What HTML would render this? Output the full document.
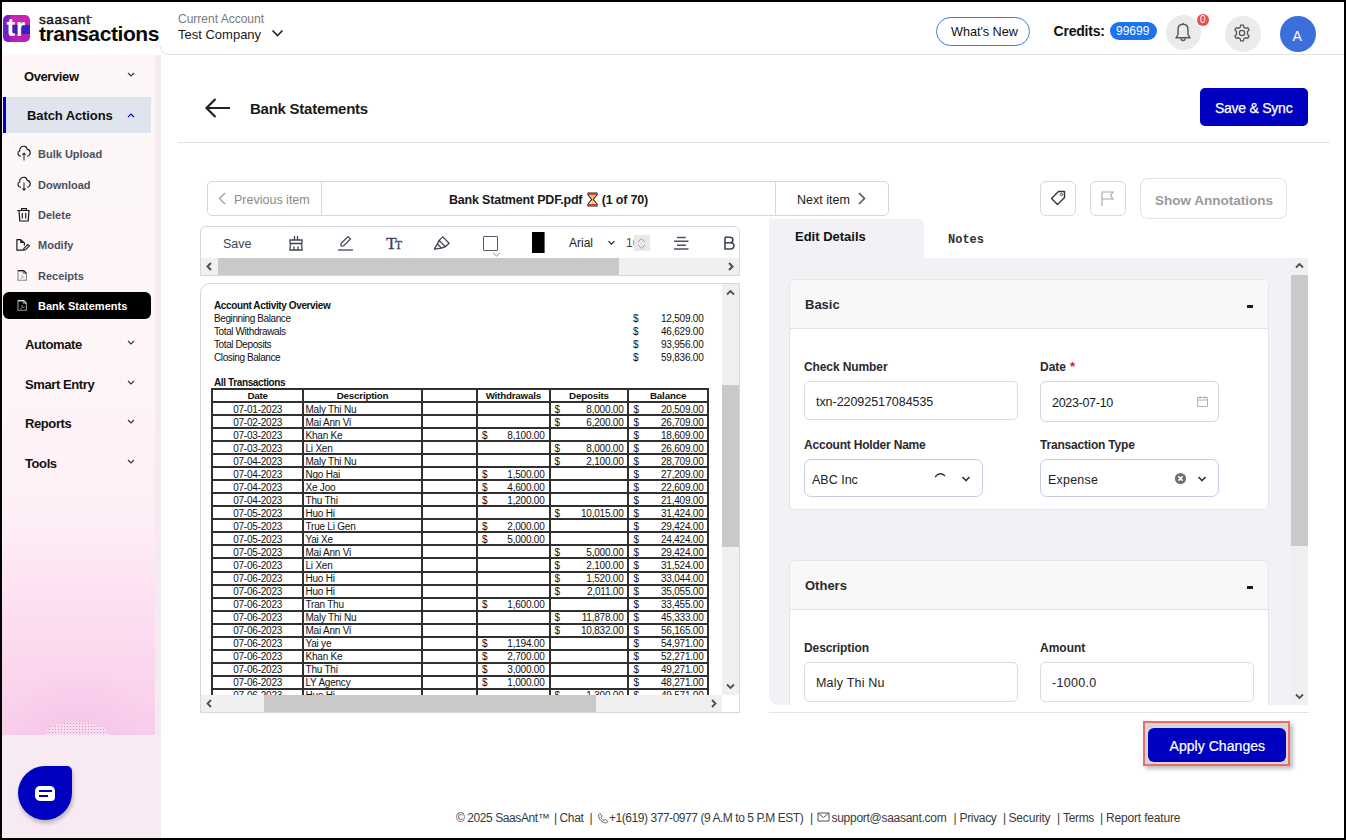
<!DOCTYPE html>
<html><head><meta charset="utf-8">
<style>
*{box-sizing:border-box;margin:0;padding:0}
html,body{width:1346px;height:840px;overflow:hidden;background:#000;font-family:"Liberation Sans",sans-serif;color:#1a1a1a}
.a{position:absolute}
#page{position:absolute;left:2px;top:2px;width:1342px;height:836px;background:#fff;overflow:hidden}
.t{position:absolute;white-space:nowrap;line-height:1}
</style></head><body>
<div id="page"></div>
<!-- everything positioned in absolute page coords -->
<div id="root" class="a" style="left:0;top:0;width:1346px;height:840px;overflow:hidden">

<!-- HEADER -->
<div class="a" style="left:3px;top:15px;width:27px;height:27px;border-radius:5px;background:linear-gradient(90deg,rgba(120,28,196,0.9) 0,rgba(120,28,196,0.9) 6px,rgba(120,28,196,0) 9px),linear-gradient(180deg,#c824b4 0%,#c824b4 37%,#3a20c2 37%,#3a20c2 70%,#b820b6 70%);overflow:hidden">
  <div class="t" style="left:3.6px;top:-0.8px;font-size:26px;font-weight:bold;color:#fff">t</div><div class="t" style="left:13.2px;top:-0.8px;font-size:26px;font-weight:bold;color:#fff;transform:scaleX(0.9);transform-origin:0 0">r</div>
</div>
<div class="t" style="left:39px;top:13px;font-size:13.5px;font-weight:normal;color:#111;letter-spacing:0.6px;-webkit-text-stroke:0.45px #111">saasant</div>
<div class="a" style="left:86px;top:17px;width:5.5px;height:1.3px;background:#3a30e0"></div>
<div class="t" style="left:39px;top:23px;font-size:21px;font-weight:bold;color:#0a0a0a;letter-spacing:-0.4px">transactions</div>

<div class="t" style="left:178px;top:13px;font-size:12px;color:#7a7a7a">Current Account</div>
<div class="t" style="left:178px;top:28px;font-size:13px;color:#1a1a1a">Test Company</div>
<svg class="a" style="left:271px;top:29px" width="13" height="9" viewBox="0 0 13 9"><path d="M1.5 1.5 L6.5 6.5 L11.5 1.5" fill="none" stroke="#222" stroke-width="1.6"/></svg>

<div class="a" style="left:168px;top:54px;width:1176px;height:1px;background:#e3e3e3"></div>
<svg class="a" style="left:160px;top:46px" width="10" height="10" viewBox="0 0 10 10"><path d="M1 0 C1 5 3 8.5 8 8.5" fill="none" stroke="#e3e3e3" stroke-width="1"/></svg>

<div class="a" style="left:936px;top:17px;width:94px;height:29px;border:1.5px solid #3a7be0;border-radius:14.5px"></div>
<div class="t" style="left:951px;top:26px;font-size:12.7px;color:#111;letter-spacing:-0.05px">What's New</div>
<div class="t" style="left:1053.5px;top:24px;font-size:14px;font-weight:bold;color:#111;letter-spacing:-0.2px">Credits:</div>
<div class="a" style="left:1110px;top:22px;width:47px;height:18px;border-radius:9px;background:#1b73f0"></div>
<div class="t" style="left:1116px;top:25px;font-size:12px;color:#fff">99699</div>
<div class="a" style="left:1166px;top:15px;width:35px;height:35px;border-radius:50%;background:#ebebeb"></div>
<svg class="a" style="left:1173px;top:22px" width="20" height="21" viewBox="0 0 20 21"><path d="M10 2.2 C6.6 2.2 5 4.8 5 7.8 V12.5 L3 15.8 H17 L15 12.5 V7.8 C15 4.8 13.4 2.2 10 2.2 Z" fill="none" stroke="#555" stroke-width="1.4" stroke-linejoin="round"/><path d="M8 16.5 A2 2 0 0 0 12 16.5" fill="none" stroke="#555" stroke-width="1.4"/><path d="M10 1 V2.2" stroke="#555" stroke-width="1.4"/></svg>
<div class="a" style="left:1197px;top:14px;width:12px;height:12px;border-radius:50%;background:#f04a4a"></div>
<div class="t" style="left:1200px;top:15px;font-size:10px;color:#fff">0</div>
<div class="a" style="left:1225px;top:16px;width:36px;height:36px;border-radius:50%;background:#ebebeb"></div>
<svg class="a" style="left:1232px;top:22.5px" width="20" height="20" viewBox="0 0 24 24"><path d="M10.3 2.5 H13.7 L14.2 5.2 A7.2 7.2 0 0 1 16.3 6.4 L18.9 5.5 L20.6 8.4 L18.5 10.2 A7.2 7.2 0 0 1 18.5 13.8 L20.6 15.6 L18.9 18.5 L16.3 17.6 A7.2 7.2 0 0 1 14.2 18.8 L13.7 21.5 H10.3 L9.8 18.8 A7.2 7.2 0 0 1 7.7 17.6 L5.1 18.5 L3.4 15.6 L5.5 13.8 A7.2 7.2 0 0 1 5.5 10.2 L3.4 8.4 L5.1 5.5 L7.7 6.4 A7.2 7.2 0 0 1 9.8 5.2 Z" fill="none" stroke="#555" stroke-width="1.5" stroke-linejoin="round"/><circle cx="12" cy="12" r="3.2" fill="none" stroke="#555" stroke-width="1.5"/></svg>
<div class="a" style="left:1280px;top:16px;width:36px;height:36px;border-radius:50%;background:#3d6fdc"></div>
<div class="t" style="left:1292.5px;top:28.5px;font-size:14px;color:#fff">A</div>

<!-- SIDEBAR -->
<div class="a" style="left:2px;top:55px;width:153px;height:680px;background:radial-gradient(circle 72px at 77px 680px,rgba(244,186,230,0.45),rgba(244,186,230,0.15) 70%,rgba(244,186,230,0) 100%),linear-gradient(180deg,#fdf7f7 0%,#fef5f8 45%,#feeff7 68%,#fde0f2 80%,#fad3ed 94%,#f8cdea 100%)"></div>
<div class="a" style="left:45px;top:722px;width:64px;height:26px;border-radius:50%;background:radial-gradient(circle,#d77fc8 0.7px,transparent 1px) 0 0/3px 3px,#f7dff0;opacity:0.85"></div>
<div class="a" style="left:2px;top:735px;width:159px;height:103px;background:#f7eaf2"></div>
<div class="a" style="left:155px;top:55px;width:6px;height:680px;background:#f4eaf0"></div>

<div class="t" style="left:24px;top:70px;font-size:13px;font-weight:bold;color:#111;letter-spacing:-0.4px">Overview</div>
<svg class="a" style="left:126px;top:71px" width="10" height="7" viewBox="0 0 10 7"><path d="M2 2 L5 5 L8 2" fill="none" stroke="#333" stroke-width="1.1"/></svg>

<div class="a" style="left:3px;top:97px;width:148px;height:36px;background:#dfe4ef"></div>
<div class="a" style="left:3px;top:97px;width:3px;height:36px;background:#0000c8"></div>
<div class="t" style="left:27px;top:109px;font-size:13px;font-weight:bold;color:#111;letter-spacing:-0.1px">Batch Actions</div>
<svg class="a" style="left:126px;top:112px" width="10" height="7" viewBox="0 0 10 7"><path d="M2 5 L5 2 L8 5" fill="none" stroke="#0000c8" stroke-width="1.1"/></svg>

<!-- sub items -->
<svg class="a" style="left:12px;top:140px" width="24" height="24" viewBox="0 0 24 24"><path d="M8.6 16.2 C5.6 16 5 12 7.6 11 C7.4 7.6 10.2 5.6 13 6.4 C14.4 6.9 15 8 15.3 9.4 C18.6 9.6 19.6 14.8 15.6 16.2" fill="none" stroke="#1a1a1a" stroke-width="1.15" stroke-linecap="round"/><path d="M12 20.6 V14" stroke="#555" stroke-width="1.3"/><path d="M9.7 14.8 L12 12.4 L14.3 14.8 Z" fill="#1a1a1a"/></svg>
<div class="t" style="left:38px;top:149px;font-size:11px;font-weight:bold;color:#4b5060">Bulk Upload</div>

<svg class="a" style="left:12px;top:171px" width="24" height="24" viewBox="0 0 24 24"><path d="M8.6 16.2 C5.6 16 5 12 7.6 11 C7.4 7.6 10.2 5.6 13 6.4 C14.4 6.9 15 8 15.3 9.4 C18.6 9.6 19.6 14.8 15.6 16.2" fill="none" stroke="#1a1a1a" stroke-width="1.15" stroke-linecap="round"/><path d="M12 11.5 V18.5" stroke="#555" stroke-width="1.3"/><path d="M9.7 17.6 L12 20 L14.3 17.6 Z" fill="#1a1a1a"/></svg>
<div class="t" style="left:38px;top:180px;font-size:11px;font-weight:bold;color:#4b5060">Download</div>

<svg class="a" style="left:12px;top:203px" width="24" height="24" viewBox="0 0 24 24"><path d="M5.3 7.5 H17.7 M9.5 7.5 V5.6 H14.5 V7.5 M7 7.5 L7.8 18 H16.2 L17 7.5 M10.3 10 V15.5 M13.7 10 V15.5" fill="none" stroke="#1a1a1a" stroke-width="1.2" stroke-linejoin="round"/></svg>
<div class="t" style="left:38px;top:210px;font-size:11px;font-weight:bold;color:#4b5060">Delete</div>

<svg class="a" style="left:12px;top:232px" width="24" height="24" viewBox="0 0 24 24"><path d="M11.3 18.1 H4.9 V7.7 H8.6 L12.4 11 V13.5" fill="none" stroke="#1a1a1a" stroke-width="1.2" stroke-linejoin="round"/><path d="M8.8 7.8 V10.4 H11.6" fill="none" stroke="#1a1a1a" stroke-width="1.2"/><path d="M11.6 18.3 L11.9 16.3 L15.9 12.3 L17.4 13.8 L13.4 17.8 Z" fill="none" stroke="#1a1a1a" stroke-width="1.1" stroke-linejoin="round"/></svg>
<div class="t" style="left:38px;top:240px;font-size:11px;font-weight:bold;color:#4b5060">Modify</div>

<svg class="a" style="left:12px;top:264px" width="24" height="24" viewBox="0 0 24 24"><path d="M6 16.2 V6.6 H11.6 L14.4 9.4 V16.2 Z" fill="none" stroke="#888" stroke-width="1.1"/><path d="M6 6.6 H11.6 L14.4 9.4" fill="none" stroke="#1a1a1a" stroke-width="1.2"/><path d="M11 6.8 V9.2 H14" fill="none" stroke="#555" stroke-width="0.9"/><path d="M9.8 11 L10.6 13 C9.6 13.6 9 14.4 8.6 15 M10.6 13 C11.2 13.8 12 13.4 12.4 13" fill="none" stroke="#999" stroke-width="0.9"/></svg>
<div class="t" style="left:38px;top:271px;font-size:11px;font-weight:bold;color:#4b5060">Receipts</div>

<div class="a" style="left:3px;top:292px;width:148px;height:27px;border-radius:6px;background:#000"></div>
<svg class="a" style="left:12px;top:294px" width="24" height="24" viewBox="0 0 24 24"><path d="M6 16.2 V6.6 H11.6 L14.4 9.4 V16.2 Z" fill="none" stroke="#999" stroke-width="1.1"/><path d="M6 6.6 H11.6 L14.4 9.4" fill="none" stroke="#ddd" stroke-width="1.2"/><path d="M11 6.8 V9.2 H14" fill="none" stroke="#aaa" stroke-width="0.9"/><path d="M9.8 11 L10.6 13 C9.6 13.6 9 14.4 8.6 15 M10.6 13 C11.2 13.8 12 13.4 12.4 13" fill="none" stroke="#aaa" stroke-width="0.9"/></svg>
<div class="t" style="left:38px;top:301px;font-size:11px;font-weight:bold;color:#fff">Bank Statements</div>

<div class="t" style="left:25px;top:338px;font-size:13px;font-weight:bold;color:#111;letter-spacing:-0.4px">Automate</div>
<svg class="a" style="left:126px;top:339px" width="10" height="7" viewBox="0 0 10 7"><path d="M2 2 L5 5 L8 2" fill="none" stroke="#333" stroke-width="1.1"/></svg>
<div class="t" style="left:25px;top:378px;font-size:13px;font-weight:bold;color:#111;letter-spacing:-0.4px">Smart Entry</div>
<svg class="a" style="left:126px;top:379px" width="10" height="7" viewBox="0 0 10 7"><path d="M2 2 L5 5 L8 2" fill="none" stroke="#333" stroke-width="1.1"/></svg>
<div class="t" style="left:25px;top:417px;font-size:13px;font-weight:bold;color:#111;letter-spacing:-0.4px">Reports</div>
<svg class="a" style="left:126px;top:418px" width="10" height="7" viewBox="0 0 10 7"><path d="M2 2 L5 5 L8 2" fill="none" stroke="#333" stroke-width="1.1"/></svg>
<div class="t" style="left:25px;top:457px;font-size:13px;font-weight:bold;color:#111;letter-spacing:-0.4px">Tools</div>
<svg class="a" style="left:126px;top:458px" width="10" height="7" viewBox="0 0 10 7"><path d="M2 2 L5 5 L8 2" fill="none" stroke="#333" stroke-width="1.1"/></svg>

<!-- chat button -->
<div class="a" style="left:18px;top:766px;width:54px;height:54px;border-radius:27px 5px 27px 27px;background:#0000c0;box-shadow:1px 3px 4px rgba(0,0,0,0.25)"></div>
<div class="a" style="left:35px;top:786px;width:20px;height:15px;border-radius:5px 5px 4px 5px;background:#fff"></div>
<div class="a" style="left:39px;top:790px;width:13px;height:2px;background:#0000c0"></div>
<div class="a" style="left:39px;top:795px;width:9px;height:2px;background:#0000c0"></div>

<!-- MAIN -->
<div class="t" style="left:250px;top:101px;font-size:15px;font-weight:bold;color:#1a1a1a;letter-spacing:-0.25px">Bank Statements</div>
<div class="a" style="left:178px;top:142px;width:1152px;height:1px;background:#e3e3e6"></div>
<div class="a" style="left:1200px;top:88px;width:108px;height:38px;border-radius:5px;background:#0000c0"></div>
<div class="t" style="left:1215px;top:101px;font-size:14px;color:#fff;letter-spacing:-0.25px;-webkit-text-stroke:0.25px #fff">Save &amp; Sync</div>
<svg class="a" style="left:204px;top:97px" width="28" height="22" viewBox="0 0 28 22"><path d="M26 11 H3 M11.5 2 L2.5 11 L11.5 20" fill="none" stroke="#222" stroke-width="2.2"/></svg>

<!-- item nav -->
<div class="a" style="left:207px;top:181px;width:682px;height:35px;border:1px solid #d6d6e4;border-radius:5px"></div>
<div class="a" style="left:321px;top:181px;width:1px;height:35px;background:#d6d6e4"></div>
<div class="a" style="left:775px;top:181px;width:1px;height:35px;background:#d6d6e4"></div>
<svg class="a" style="left:216px;top:191px" width="12" height="15" viewBox="0 0 12 15"><path d="M9 2 L3.5 7.5 L9 13" fill="none" stroke="#aaa" stroke-width="1.6"/></svg>
<div class="t" style="left:234px;top:194px;font-size:12.5px;color:#8a8a8a">Previous item</div>
<div class="t" style="left:449px;top:194px;font-size:12.5px;font-weight:bold;color:#1a1a1a;letter-spacing:-0.2px">Bank Statment PDF.pdf <span style="display:inline-block;width:13px"></span> (1 of 70)</div>
<svg class="a" style="left:587px;top:192px" width="11" height="15" viewBox="0 0 11 15"><path d="M1 1 H10 V3 L6.2 7.5 L10 12 V14 H1 V12 L4.8 7.5 L1 3 Z" fill="#eef2f8" stroke="#111" stroke-width="1.1" stroke-linejoin="round"/><path d="M1.5 1.5 H9.5 V3 H1.5 Z M1.5 12 H9.5 V13.5 H1.5 Z" fill="#e0301e"/><path d="M2.2 3.2 H8.8 L5.5 7.2 Z" fill="#f8c040"/><path d="M5.5 7 V11.5" stroke="#f8c040" stroke-width="0.9"/><path d="M3 12 L5.5 10.8 L8 12 Z" fill="#f8c040"/></svg>
<div class="t" style="left:797px;top:194px;font-size:12.5px;color:#1a1a1a">Next item</div>
<svg class="a" style="left:856px;top:191px" width="12" height="15" viewBox="0 0 12 15"><path d="M3 2 L8.5 7.5 L3 13" fill="none" stroke="#555" stroke-width="1.6"/></svg>

<div class="a" style="left:1040px;top:181px;width:36px;height:35px;border:1px solid #d8d8e4;border-radius:6px"></div>
<svg class="a" style="left:1049px;top:189px" width="18" height="18" viewBox="0 0 18 18"><path d="M9.5 2.5 H15.5 V8.5 L8.5 15.5 L2.5 9.5 Z" fill="none" stroke="#333" stroke-width="1.4" stroke-linejoin="round"/><circle cx="12.5" cy="5.5" r="1.1" fill="none" stroke="#333" stroke-width="1"/></svg>
<div class="a" style="left:1090px;top:181px;width:36px;height:35px;border:1px solid #d8d8e4;border-radius:6px"></div>
<svg class="a" style="left:1099px;top:189px" width="18" height="18" viewBox="0 0 18 18"><path d="M3 17 V3 H14 L11.5 6.5 L14 10 H3" fill="none" stroke="#aaa" stroke-width="1.2"/></svg>
<div class="a" style="left:1140px;top:178px;width:147px;height:41px;border:1px solid #e0e0e6;border-radius:8px"></div>
<div class="t" style="left:1155px;top:194px;font-size:13.5px;font-weight:bold;color:#9a9a9a">Show Annotations</div>

<!-- PDF toolbar -->
<div class="a" style="left:200px;top:226px;width:540px;height:50px;border:1px solid #d6d6e4;border-radius:6px 6px 0 0;overflow:hidden">
  <div class="a" style="left:0;top:31px;width:538px;height:17px;background:#f0f0f0"></div>
  <div class="a" style="left:17px;top:31px;width:401px;height:17px;background:#c9c9c9"></div>
</div>
<svg class="a" style="left:203px;top:260px" width="12" height="13" viewBox="0 0 12 13"><path d="M8 3 L4.5 6.5 L8 10" fill="none" stroke="#505050" stroke-width="2"/></svg>
<svg class="a" style="left:725px;top:260px" width="12" height="13" viewBox="0 0 12 13"><path d="M4 3 L7.5 6.5 L4 10" fill="none" stroke="#505050" stroke-width="2"/></svg>
<div class="t" style="left:223px;top:238px;font-size:12.5px;color:#3d4454">Save</div>
<svg class="a" style="left:288px;top:235px" width="16" height="16" viewBox="0 0 16 16"><path d="M6.5 1 V5 H9.5 V1 M2 8.5 V5 H14 V8.5 M2.5 8.5 H13.5 M2.5 8.5 L1.8 15 H14.2 L13.5 8.5 M6 11.5 V15 M10 11.5 V15" fill="none" stroke="#3d4454" stroke-width="1.3"/></svg>
<svg class="a" style="left:337px;top:235px" width="18" height="16" viewBox="0 0 18 16"><path d="M4 11 L4 8.5 L11 1.5 L13.5 4 L6.5 11 Z" fill="none" stroke="#3d4454" stroke-width="1.2"/><path d="M1 15 H16" stroke="#3d4454" stroke-width="1.3"/></svg>
<div class="t" style="left:386px;top:234.5px;font-family:'Liberation Serif',serif;font-size:17.5px;color:#3d4454;letter-spacing:-1.6px;-webkit-text-stroke:0.3px #3d4454">T<span style="font-size:11.5px;letter-spacing:0">T</span></div>
<svg class="a" style="left:433px;top:235px" width="18" height="16" viewBox="0 0 18 16"><path d="M9.8 1.9 L16.1 8.2 L12.4 11.7 L6.1 5.4 Z M6.1 5.4 L4.4 8.9 L8.6 13.2 L12.4 11.7 M4.4 8.9 L1.4 14.1 L8.6 13.2" fill="none" stroke="#3d4454" stroke-width="1.3" stroke-linejoin="round"/></svg>
<div class="a" style="left:483px;top:236px;width:15px;height:15px;border:1.5px solid #555b68;border-radius:1px"></div>
<svg class="a" style="left:492px;top:252px" width="9" height="5" viewBox="0 0 9 5"><path d="M1 1 L4.5 4 L8 1" fill="none" stroke="#888" stroke-width="0.9"/></svg>
<div class="a" style="left:532px;top:232px;width:13px;height:21px;background:#000;border-right:1.5px solid #666"></div>
<div class="t" style="left:569px;top:237px;font-size:12px;color:#222">Arial</div>
<svg class="a" style="left:607px;top:240px" width="9" height="6" viewBox="0 0 9 6"><path d="M1.5 1.2 L4.5 4.2 L7.5 1.2" fill="none" stroke="#222" stroke-width="1.2"/></svg>
<div class="t" style="left:626px;top:237px;font-size:12px;color:#444;width:8px;overflow:hidden">16</div>
<div class="a" style="left:634px;top:235px;width:16px;height:16px;background:#e8e8e8"></div>
<svg class="a" style="left:636px;top:237px" width="11" height="13" viewBox="0 0 11 13"><path d="M2 5 L5.5 1.5 L9 5 M2 8 L5.5 11.5 L9 8" fill="none" stroke="#999" stroke-width="0.9"/></svg>
<svg class="a" style="left:665px;top:230px" width="80" height="26" viewBox="0 0 80 26"><path d="M12 7.4 H20.8 M9 11.2 H23.5 M12 15.2 H20.8 M9 18.9 H23.5" stroke="#4a5160" stroke-width="1.5"/><path d="M60 7.3 V19 H65.3 C67.6 19 68.9 17.8 68.9 15.8 C68.9 13.9 67.6 12.7 65.3 12.7 H60 M60 7.3 H64.8 C66.8 7.3 67.9 8.3 67.9 9.9 C67.9 11.6 66.8 12.7 64.8 12.7" fill="none" stroke="#3d4454" stroke-width="1.6"/></svg>

<!-- PDF VIEWER -->
<div class="a" style="left:200px;top:283px;width:540px;height:430px;border:1px solid #d6d6e4;border-radius:10px 0 0 0;overflow:hidden;background:#fff">
 <div class="a" style="left:0;top:0;width:521px;height:411px;overflow:hidden">
<!--PDFSTART-->
<div class="t" style="left:13.0px;top:17.0px;font-size:10px;font-weight:bold;letter-spacing:-0.38px;color:#111">Account Activity Overview</div>
<div class="t" style="left:13.0px;top:29.5px;font-size:10px;color:#111;letter-spacing:-0.22px;letter-spacing:-0.4px">Beginning Balance</div>
<div class="t" style="left:432.0px;top:29.5px;font-size:10px;color:#111;letter-spacing:-0.22px">$</div>
<div class="t" style="left:422.5px;top:29.5px;width:80px;text-align:right;font-size:10px;color:#111;letter-spacing:-0.22px">12,509.00</div>
<div class="t" style="left:13.0px;top:42.5px;font-size:10px;color:#111;letter-spacing:-0.22px;letter-spacing:-0.4px">Total Withdrawals</div>
<div class="t" style="left:432.0px;top:42.5px;font-size:10px;color:#111;letter-spacing:-0.22px">$</div>
<div class="t" style="left:422.5px;top:42.5px;width:80px;text-align:right;font-size:10px;color:#111;letter-spacing:-0.22px">46,629.00</div>
<div class="t" style="left:13.0px;top:55.5px;font-size:10px;color:#111;letter-spacing:-0.22px;letter-spacing:-0.4px">Total Deposits</div>
<div class="t" style="left:432.0px;top:55.5px;font-size:10px;color:#111;letter-spacing:-0.22px">$</div>
<div class="t" style="left:422.5px;top:55.5px;width:80px;text-align:right;font-size:10px;color:#111;letter-spacing:-0.22px">93,956.00</div>
<div class="t" style="left:13.0px;top:68.5px;font-size:10px;color:#111;letter-spacing:-0.22px;letter-spacing:-0.4px">Closing Balance</div>
<div class="t" style="left:432.0px;top:68.5px;font-size:10px;color:#111;letter-spacing:-0.22px">$</div>
<div class="t" style="left:422.5px;top:68.5px;width:80px;text-align:right;font-size:10px;color:#111;letter-spacing:-0.22px">59,836.00</div>
<div class="t" style="left:13.0px;top:93.9px;font-size:10px;font-weight:bold;letter-spacing:-0.38px;color:#111">All Transactions</div>
<div class="a" style="left:10.0px;top:104.0px;width:498.0px;height:2.0px;background:#303030"></div>
<div class="a" style="left:10.0px;top:117.0px;width:498.0px;height:2.0px;background:#303030"></div>
<div class="a" style="left:10.0px;top:130.0px;width:498.0px;height:2.0px;background:#303030"></div>
<div class="a" style="left:10.0px;top:143.0px;width:498.0px;height:2.0px;background:#303030"></div>
<div class="a" style="left:10.0px;top:156.0px;width:498.0px;height:2.0px;background:#303030"></div>
<div class="a" style="left:10.0px;top:169.0px;width:498.0px;height:2.0px;background:#303030"></div>
<div class="a" style="left:10.0px;top:182.0px;width:498.0px;height:2.0px;background:#303030"></div>
<div class="a" style="left:10.0px;top:195.0px;width:498.0px;height:2.0px;background:#303030"></div>
<div class="a" style="left:10.0px;top:208.0px;width:498.0px;height:2.0px;background:#303030"></div>
<div class="a" style="left:10.0px;top:221.0px;width:498.0px;height:2.0px;background:#303030"></div>
<div class="a" style="left:10.0px;top:234.0px;width:498.0px;height:2.0px;background:#303030"></div>
<div class="a" style="left:10.0px;top:247.0px;width:498.0px;height:2.0px;background:#303030"></div>
<div class="a" style="left:10.0px;top:260.0px;width:498.0px;height:2.0px;background:#303030"></div>
<div class="a" style="left:10.0px;top:273.0px;width:498.0px;height:2.0px;background:#303030"></div>
<div class="a" style="left:10.0px;top:287.0px;width:498.0px;height:2.0px;background:#303030"></div>
<div class="a" style="left:10.0px;top:300.0px;width:498.0px;height:2.0px;background:#303030"></div>
<div class="a" style="left:10.0px;top:313.0px;width:498.0px;height:2.0px;background:#303030"></div>
<div class="a" style="left:10.0px;top:326.0px;width:498.0px;height:2.0px;background:#303030"></div>
<div class="a" style="left:10.0px;top:339.0px;width:498.0px;height:2.0px;background:#303030"></div>
<div class="a" style="left:10.0px;top:352.0px;width:498.0px;height:2.0px;background:#303030"></div>
<div class="a" style="left:10.0px;top:365.0px;width:498.0px;height:2.0px;background:#303030"></div>
<div class="a" style="left:10.0px;top:378.0px;width:498.0px;height:2.0px;background:#303030"></div>
<div class="a" style="left:10.0px;top:391.0px;width:498.0px;height:2.0px;background:#303030"></div>
<div class="a" style="left:10.0px;top:404.0px;width:498.0px;height:2.0px;background:#303030"></div>
<div class="a" style="left:10.0px;top:417.0px;width:498.0px;height:2.0px;background:#303030"></div>
<div class="a" style="left:10.0px;top:104.0px;width:2.0px;height:315.0px;background:#303030"></div>
<div class="a" style="left:101.0px;top:104.0px;width:2.0px;height:315.0px;background:#303030"></div>
<div class="a" style="left:220.0px;top:104.0px;width:2.0px;height:315.0px;background:#303030"></div>
<div class="a" style="left:275.0px;top:104.0px;width:2.0px;height:315.0px;background:#303030"></div>
<div class="a" style="left:348.0px;top:104.0px;width:2.0px;height:315.0px;background:#303030"></div>
<div class="a" style="left:426.0px;top:104.0px;width:2.0px;height:315.0px;background:#303030"></div>
<div class="a" style="left:506.0px;top:104.0px;width:2.0px;height:315.0px;background:#303030"></div>
<div class="t" style="left:11.0px;top:107.3px;width:91.30000000000001px;text-align:center;font-size:9.8px;font-weight:bold;color:#111;letter-spacing:-0.2px">Date</div>
<div class="t" style="left:102.3px;top:107.3px;width:118.5px;text-align:center;font-size:9.8px;font-weight:bold;color:#111;letter-spacing:-0.2px">Description</div>
<div class="t" style="left:276.0px;top:107.3px;width:72.70000000000005px;text-align:center;font-size:9.8px;font-weight:bold;color:#111;letter-spacing:-0.2px">Withdrawals</div>
<div class="t" style="left:348.7px;top:107.3px;width:78.5px;text-align:center;font-size:9.8px;font-weight:bold;color:#111;letter-spacing:-0.2px">Deposits</div>
<div class="t" style="left:427.2px;top:107.3px;width:79.79999999999995px;text-align:center;font-size:9.8px;font-weight:bold;color:#111;letter-spacing:-0.2px">Balance</div>
<div class="t" style="left:11.0px;top:120.5px;width:91.30000000000001px;text-align:center;font-size:10px;color:#111;letter-spacing:-0.22px">07-01-2023</div>
<div class="t" style="left:104.5px;top:120.5px;font-size:10px;color:#111;letter-spacing:-0.22px">Maly Thi Nu</div>
<div class="t" style="left:353.5px;top:120.5px;font-size:10px;color:#111;letter-spacing:-0.22px">$</div>
<div class="t" style="left:342.5px;top:120.5px;width:80px;text-align:right;font-size:10px;color:#111;letter-spacing:-0.22px">8,000.00</div>
<div class="t" style="left:432.5px;top:120.5px;font-size:10px;color:#111;letter-spacing:-0.22px">$</div>
<div class="t" style="left:422.5px;top:120.5px;width:80px;text-align:right;font-size:10px;color:#111;letter-spacing:-0.22px">20,509.00</div>
<div class="t" style="left:11.0px;top:133.6px;width:91.30000000000001px;text-align:center;font-size:10px;color:#111;letter-spacing:-0.22px">07-02-2023</div>
<div class="t" style="left:104.5px;top:133.6px;font-size:10px;color:#111;letter-spacing:-0.22px">Mai Ann Vi</div>
<div class="t" style="left:353.5px;top:133.6px;font-size:10px;color:#111;letter-spacing:-0.22px">$</div>
<div class="t" style="left:342.5px;top:133.6px;width:80px;text-align:right;font-size:10px;color:#111;letter-spacing:-0.22px">6,200.00</div>
<div class="t" style="left:432.5px;top:133.6px;font-size:10px;color:#111;letter-spacing:-0.22px">$</div>
<div class="t" style="left:422.5px;top:133.6px;width:80px;text-align:right;font-size:10px;color:#111;letter-spacing:-0.22px">26,709.00</div>
<div class="t" style="left:11.0px;top:146.6px;width:91.30000000000001px;text-align:center;font-size:10px;color:#111;letter-spacing:-0.22px">07-03-2023</div>
<div class="t" style="left:104.5px;top:146.6px;font-size:10px;color:#111;letter-spacing:-0.22px">Khan Ke</div>
<div class="t" style="left:281.0px;top:146.6px;font-size:10px;color:#111;letter-spacing:-0.22px">$</div>
<div class="t" style="left:263.5px;top:146.6px;width:80px;text-align:right;font-size:10px;color:#111;letter-spacing:-0.22px">8,100.00</div>
<div class="t" style="left:432.5px;top:146.6px;font-size:10px;color:#111;letter-spacing:-0.22px">$</div>
<div class="t" style="left:422.5px;top:146.6px;width:80px;text-align:right;font-size:10px;color:#111;letter-spacing:-0.22px">18,609.00</div>
<div class="t" style="left:11.0px;top:159.6px;width:91.30000000000001px;text-align:center;font-size:10px;color:#111;letter-spacing:-0.22px">07-03-2023</div>
<div class="t" style="left:104.5px;top:159.6px;font-size:10px;color:#111;letter-spacing:-0.22px">Li Xen</div>
<div class="t" style="left:353.5px;top:159.6px;font-size:10px;color:#111;letter-spacing:-0.22px">$</div>
<div class="t" style="left:342.5px;top:159.6px;width:80px;text-align:right;font-size:10px;color:#111;letter-spacing:-0.22px">8,000.00</div>
<div class="t" style="left:432.5px;top:159.6px;font-size:10px;color:#111;letter-spacing:-0.22px">$</div>
<div class="t" style="left:422.5px;top:159.6px;width:80px;text-align:right;font-size:10px;color:#111;letter-spacing:-0.22px">26,609.00</div>
<div class="t" style="left:11.0px;top:172.6px;width:91.30000000000001px;text-align:center;font-size:10px;color:#111;letter-spacing:-0.22px">07-04-2023</div>
<div class="t" style="left:104.5px;top:172.6px;font-size:10px;color:#111;letter-spacing:-0.22px">Maly Thi Nu</div>
<div class="t" style="left:353.5px;top:172.6px;font-size:10px;color:#111;letter-spacing:-0.22px">$</div>
<div class="t" style="left:342.5px;top:172.6px;width:80px;text-align:right;font-size:10px;color:#111;letter-spacing:-0.22px">2,100.00</div>
<div class="t" style="left:432.5px;top:172.6px;font-size:10px;color:#111;letter-spacing:-0.22px">$</div>
<div class="t" style="left:422.5px;top:172.6px;width:80px;text-align:right;font-size:10px;color:#111;letter-spacing:-0.22px">28,709.00</div>
<div class="t" style="left:11.0px;top:185.7px;width:91.30000000000001px;text-align:center;font-size:10px;color:#111;letter-spacing:-0.22px">07-04-2023</div>
<div class="t" style="left:104.5px;top:185.7px;font-size:10px;color:#111;letter-spacing:-0.22px">Ngo Hai</div>
<div class="t" style="left:281.0px;top:185.7px;font-size:10px;color:#111;letter-spacing:-0.22px">$</div>
<div class="t" style="left:263.5px;top:185.7px;width:80px;text-align:right;font-size:10px;color:#111;letter-spacing:-0.22px">1,500.00</div>
<div class="t" style="left:432.5px;top:185.7px;font-size:10px;color:#111;letter-spacing:-0.22px">$</div>
<div class="t" style="left:422.5px;top:185.7px;width:80px;text-align:right;font-size:10px;color:#111;letter-spacing:-0.22px">27,209.00</div>
<div class="t" style="left:11.0px;top:198.7px;width:91.30000000000001px;text-align:center;font-size:10px;color:#111;letter-spacing:-0.22px">07-04-2023</div>
<div class="t" style="left:104.5px;top:198.7px;font-size:10px;color:#111;letter-spacing:-0.22px">Xe Joo</div>
<div class="t" style="left:281.0px;top:198.7px;font-size:10px;color:#111;letter-spacing:-0.22px">$</div>
<div class="t" style="left:263.5px;top:198.7px;width:80px;text-align:right;font-size:10px;color:#111;letter-spacing:-0.22px">4,600.00</div>
<div class="t" style="left:432.5px;top:198.7px;font-size:10px;color:#111;letter-spacing:-0.22px">$</div>
<div class="t" style="left:422.5px;top:198.7px;width:80px;text-align:right;font-size:10px;color:#111;letter-spacing:-0.22px">22,609.00</div>
<div class="t" style="left:11.0px;top:211.7px;width:91.30000000000001px;text-align:center;font-size:10px;color:#111;letter-spacing:-0.22px">07-04-2023</div>
<div class="t" style="left:104.5px;top:211.7px;font-size:10px;color:#111;letter-spacing:-0.22px">Thu Thi</div>
<div class="t" style="left:281.0px;top:211.7px;font-size:10px;color:#111;letter-spacing:-0.22px">$</div>
<div class="t" style="left:263.5px;top:211.7px;width:80px;text-align:right;font-size:10px;color:#111;letter-spacing:-0.22px">1,200.00</div>
<div class="t" style="left:432.5px;top:211.7px;font-size:10px;color:#111;letter-spacing:-0.22px">$</div>
<div class="t" style="left:422.5px;top:211.7px;width:80px;text-align:right;font-size:10px;color:#111;letter-spacing:-0.22px">21,409.00</div>
<div class="t" style="left:11.0px;top:224.8px;width:91.30000000000001px;text-align:center;font-size:10px;color:#111;letter-spacing:-0.22px">07-05-2023</div>
<div class="t" style="left:104.5px;top:224.8px;font-size:10px;color:#111;letter-spacing:-0.22px">Huo Hi</div>
<div class="t" style="left:353.5px;top:224.8px;font-size:10px;color:#111;letter-spacing:-0.22px">$</div>
<div class="t" style="left:342.5px;top:224.8px;width:80px;text-align:right;font-size:10px;color:#111;letter-spacing:-0.22px">10,015.00</div>
<div class="t" style="left:432.5px;top:224.8px;font-size:10px;color:#111;letter-spacing:-0.22px">$</div>
<div class="t" style="left:422.5px;top:224.8px;width:80px;text-align:right;font-size:10px;color:#111;letter-spacing:-0.22px">31,424.00</div>
<div class="t" style="left:11.0px;top:237.8px;width:91.30000000000001px;text-align:center;font-size:10px;color:#111;letter-spacing:-0.22px">07-05-2023</div>
<div class="t" style="left:104.5px;top:237.8px;font-size:10px;color:#111;letter-spacing:-0.22px">True Li Gen</div>
<div class="t" style="left:281.0px;top:237.8px;font-size:10px;color:#111;letter-spacing:-0.22px">$</div>
<div class="t" style="left:263.5px;top:237.8px;width:80px;text-align:right;font-size:10px;color:#111;letter-spacing:-0.22px">2,000.00</div>
<div class="t" style="left:432.5px;top:237.8px;font-size:10px;color:#111;letter-spacing:-0.22px">$</div>
<div class="t" style="left:422.5px;top:237.8px;width:80px;text-align:right;font-size:10px;color:#111;letter-spacing:-0.22px">29,424.00</div>
<div class="t" style="left:11.0px;top:250.8px;width:91.30000000000001px;text-align:center;font-size:10px;color:#111;letter-spacing:-0.22px">07-05-2023</div>
<div class="t" style="left:104.5px;top:250.8px;font-size:10px;color:#111;letter-spacing:-0.22px">Yai Xe</div>
<div class="t" style="left:281.0px;top:250.8px;font-size:10px;color:#111;letter-spacing:-0.22px">$</div>
<div class="t" style="left:263.5px;top:250.8px;width:80px;text-align:right;font-size:10px;color:#111;letter-spacing:-0.22px">5,000.00</div>
<div class="t" style="left:432.5px;top:250.8px;font-size:10px;color:#111;letter-spacing:-0.22px">$</div>
<div class="t" style="left:422.5px;top:250.8px;width:80px;text-align:right;font-size:10px;color:#111;letter-spacing:-0.22px">24,424.00</div>
<div class="t" style="left:11.0px;top:263.9px;width:91.30000000000001px;text-align:center;font-size:10px;color:#111;letter-spacing:-0.22px">07-05-2023</div>
<div class="t" style="left:104.5px;top:263.9px;font-size:10px;color:#111;letter-spacing:-0.22px">Mai Ann Vi</div>
<div class="t" style="left:353.5px;top:263.9px;font-size:10px;color:#111;letter-spacing:-0.22px">$</div>
<div class="t" style="left:342.5px;top:263.9px;width:80px;text-align:right;font-size:10px;color:#111;letter-spacing:-0.22px">5,000.00</div>
<div class="t" style="left:432.5px;top:263.9px;font-size:10px;color:#111;letter-spacing:-0.22px">$</div>
<div class="t" style="left:422.5px;top:263.9px;width:80px;text-align:right;font-size:10px;color:#111;letter-spacing:-0.22px">29,424.00</div>
<div class="t" style="left:11.0px;top:276.9px;width:91.30000000000001px;text-align:center;font-size:10px;color:#111;letter-spacing:-0.22px">07-06-2023</div>
<div class="t" style="left:104.5px;top:276.9px;font-size:10px;color:#111;letter-spacing:-0.22px">Li Xen</div>
<div class="t" style="left:353.5px;top:276.9px;font-size:10px;color:#111;letter-spacing:-0.22px">$</div>
<div class="t" style="left:342.5px;top:276.9px;width:80px;text-align:right;font-size:10px;color:#111;letter-spacing:-0.22px">2,100.00</div>
<div class="t" style="left:432.5px;top:276.9px;font-size:10px;color:#111;letter-spacing:-0.22px">$</div>
<div class="t" style="left:422.5px;top:276.9px;width:80px;text-align:right;font-size:10px;color:#111;letter-spacing:-0.22px">31,524.00</div>
<div class="t" style="left:11.0px;top:289.9px;width:91.30000000000001px;text-align:center;font-size:10px;color:#111;letter-spacing:-0.22px">07-06-2023</div>
<div class="t" style="left:104.5px;top:289.9px;font-size:10px;color:#111;letter-spacing:-0.22px">Huo Hi</div>
<div class="t" style="left:353.5px;top:289.9px;font-size:10px;color:#111;letter-spacing:-0.22px">$</div>
<div class="t" style="left:342.5px;top:289.9px;width:80px;text-align:right;font-size:10px;color:#111;letter-spacing:-0.22px">1,520.00</div>
<div class="t" style="left:432.5px;top:289.9px;font-size:10px;color:#111;letter-spacing:-0.22px">$</div>
<div class="t" style="left:422.5px;top:289.9px;width:80px;text-align:right;font-size:10px;color:#111;letter-spacing:-0.22px">33,044.00</div>
<div class="t" style="left:11.0px;top:302.9px;width:91.30000000000001px;text-align:center;font-size:10px;color:#111;letter-spacing:-0.22px">07-06-2023</div>
<div class="t" style="left:104.5px;top:302.9px;font-size:10px;color:#111;letter-spacing:-0.22px">Huo Hi</div>
<div class="t" style="left:353.5px;top:302.9px;font-size:10px;color:#111;letter-spacing:-0.22px">$</div>
<div class="t" style="left:342.5px;top:302.9px;width:80px;text-align:right;font-size:10px;color:#111;letter-spacing:-0.22px">2,011.00</div>
<div class="t" style="left:432.5px;top:302.9px;font-size:10px;color:#111;letter-spacing:-0.22px">$</div>
<div class="t" style="left:422.5px;top:302.9px;width:80px;text-align:right;font-size:10px;color:#111;letter-spacing:-0.22px">35,055.00</div>
<div class="t" style="left:11.0px;top:316.0px;width:91.30000000000001px;text-align:center;font-size:10px;color:#111;letter-spacing:-0.22px">07-06-2023</div>
<div class="t" style="left:104.5px;top:316.0px;font-size:10px;color:#111;letter-spacing:-0.22px">Tran Thu</div>
<div class="t" style="left:281.0px;top:316.0px;font-size:10px;color:#111;letter-spacing:-0.22px">$</div>
<div class="t" style="left:263.5px;top:316.0px;width:80px;text-align:right;font-size:10px;color:#111;letter-spacing:-0.22px">1,600.00</div>
<div class="t" style="left:432.5px;top:316.0px;font-size:10px;color:#111;letter-spacing:-0.22px">$</div>
<div class="t" style="left:422.5px;top:316.0px;width:80px;text-align:right;font-size:10px;color:#111;letter-spacing:-0.22px">33,455.00</div>
<div class="t" style="left:11.0px;top:329.0px;width:91.30000000000001px;text-align:center;font-size:10px;color:#111;letter-spacing:-0.22px">07-06-2023</div>
<div class="t" style="left:104.5px;top:329.0px;font-size:10px;color:#111;letter-spacing:-0.22px">Maly Thi Nu</div>
<div class="t" style="left:353.5px;top:329.0px;font-size:10px;color:#111;letter-spacing:-0.22px">$</div>
<div class="t" style="left:342.5px;top:329.0px;width:80px;text-align:right;font-size:10px;color:#111;letter-spacing:-0.22px">11,878.00</div>
<div class="t" style="left:432.5px;top:329.0px;font-size:10px;color:#111;letter-spacing:-0.22px">$</div>
<div class="t" style="left:422.5px;top:329.0px;width:80px;text-align:right;font-size:10px;color:#111;letter-spacing:-0.22px">45,333.00</div>
<div class="t" style="left:11.0px;top:342.0px;width:91.30000000000001px;text-align:center;font-size:10px;color:#111;letter-spacing:-0.22px">07-06-2023</div>
<div class="t" style="left:104.5px;top:342.0px;font-size:10px;color:#111;letter-spacing:-0.22px">Mai Ann Vi</div>
<div class="t" style="left:353.5px;top:342.0px;font-size:10px;color:#111;letter-spacing:-0.22px">$</div>
<div class="t" style="left:342.5px;top:342.0px;width:80px;text-align:right;font-size:10px;color:#111;letter-spacing:-0.22px">10,832.00</div>
<div class="t" style="left:432.5px;top:342.0px;font-size:10px;color:#111;letter-spacing:-0.22px">$</div>
<div class="t" style="left:422.5px;top:342.0px;width:80px;text-align:right;font-size:10px;color:#111;letter-spacing:-0.22px">56,165.00</div>
<div class="t" style="left:11.0px;top:355.1px;width:91.30000000000001px;text-align:center;font-size:10px;color:#111;letter-spacing:-0.22px">07-06-2023</div>
<div class="t" style="left:104.5px;top:355.1px;font-size:10px;color:#111;letter-spacing:-0.22px">Yai ye</div>
<div class="t" style="left:281.0px;top:355.1px;font-size:10px;color:#111;letter-spacing:-0.22px">$</div>
<div class="t" style="left:263.5px;top:355.1px;width:80px;text-align:right;font-size:10px;color:#111;letter-spacing:-0.22px">1,194.00</div>
<div class="t" style="left:432.5px;top:355.1px;font-size:10px;color:#111;letter-spacing:-0.22px">$</div>
<div class="t" style="left:422.5px;top:355.1px;width:80px;text-align:right;font-size:10px;color:#111;letter-spacing:-0.22px">54,971.00</div>
<div class="t" style="left:11.0px;top:368.1px;width:91.30000000000001px;text-align:center;font-size:10px;color:#111;letter-spacing:-0.22px">07-06-2023</div>
<div class="t" style="left:104.5px;top:368.1px;font-size:10px;color:#111;letter-spacing:-0.22px">Khan Ke</div>
<div class="t" style="left:281.0px;top:368.1px;font-size:10px;color:#111;letter-spacing:-0.22px">$</div>
<div class="t" style="left:263.5px;top:368.1px;width:80px;text-align:right;font-size:10px;color:#111;letter-spacing:-0.22px">2,700.00</div>
<div class="t" style="left:432.5px;top:368.1px;font-size:10px;color:#111;letter-spacing:-0.22px">$</div>
<div class="t" style="left:422.5px;top:368.1px;width:80px;text-align:right;font-size:10px;color:#111;letter-spacing:-0.22px">52,271.00</div>
<div class="t" style="left:11.0px;top:381.1px;width:91.30000000000001px;text-align:center;font-size:10px;color:#111;letter-spacing:-0.22px">07-06-2023</div>
<div class="t" style="left:104.5px;top:381.1px;font-size:10px;color:#111;letter-spacing:-0.22px">Thu Thi</div>
<div class="t" style="left:281.0px;top:381.1px;font-size:10px;color:#111;letter-spacing:-0.22px">$</div>
<div class="t" style="left:263.5px;top:381.1px;width:80px;text-align:right;font-size:10px;color:#111;letter-spacing:-0.22px">3,000.00</div>
<div class="t" style="left:432.5px;top:381.1px;font-size:10px;color:#111;letter-spacing:-0.22px">$</div>
<div class="t" style="left:422.5px;top:381.1px;width:80px;text-align:right;font-size:10px;color:#111;letter-spacing:-0.22px">49,271.00</div>
<div class="t" style="left:11.0px;top:394.2px;width:91.30000000000001px;text-align:center;font-size:10px;color:#111;letter-spacing:-0.22px">07-06-2023</div>
<div class="t" style="left:104.5px;top:394.2px;font-size:10px;color:#111;letter-spacing:-0.22px">LY Agency</div>
<div class="t" style="left:281.0px;top:394.2px;font-size:10px;color:#111;letter-spacing:-0.22px">$</div>
<div class="t" style="left:263.5px;top:394.2px;width:80px;text-align:right;font-size:10px;color:#111;letter-spacing:-0.22px">1,000.00</div>
<div class="t" style="left:432.5px;top:394.2px;font-size:10px;color:#111;letter-spacing:-0.22px">$</div>
<div class="t" style="left:422.5px;top:394.2px;width:80px;text-align:right;font-size:10px;color:#111;letter-spacing:-0.22px">48,271.00</div>
<div class="t" style="left:11.0px;top:407.2px;width:91.30000000000001px;text-align:center;font-size:10px;color:#111;letter-spacing:-0.22px">07-06-2023</div>
<div class="t" style="left:104.5px;top:407.2px;font-size:10px;color:#111;letter-spacing:-0.22px">Huo Hi</div>
<div class="t" style="left:353.5px;top:407.2px;font-size:10px;color:#111;letter-spacing:-0.22px">$</div>
<div class="t" style="left:342.5px;top:407.2px;width:80px;text-align:right;font-size:10px;color:#111;letter-spacing:-0.22px">1,300.00</div>
<div class="t" style="left:432.5px;top:407.2px;font-size:10px;color:#111;letter-spacing:-0.22px">$</div>
<div class="t" style="left:422.5px;top:407.2px;width:80px;text-align:right;font-size:10px;color:#111;letter-spacing:-0.22px">49,571.00</div>
<!--PDFEND-->
 </div>
 <div class="a" style="left:521px;top:0;width:17px;height:411px;background:#f0f0f0"></div>
 <div class="a" style="left:521px;top:101px;width:17px;height:162px;background:#c9c9c9"></div>
 <div class="a" style="left:0;top:411px;width:521px;height:17px;background:#f0f0f0"></div>
 <div class="a" style="left:63px;top:411px;width:332px;height:17px;background:#c9c9c9"></div>
 <div class="a" style="left:521px;top:411px;width:17px;height:17px;background:#fff"></div>
 <svg class="a" style="left:524px;top:3px" width="11" height="11" viewBox="0 0 11 11"><path d="M2 7.5 L5.5 4 L9 7.5" fill="none" stroke="#505050" stroke-width="1.8"/></svg>
 <svg class="a" style="left:524px;top:397px" width="11" height="11" viewBox="0 0 11 11"><path d="M2 3.5 L5.5 7 L9 3.5" fill="none" stroke="#505050" stroke-width="1.8"/></svg>
 <svg class="a" style="left:3px;top:414px" width="11" height="11" viewBox="0 0 11 11"><path d="M7 2 L3.5 5.5 L7 9" fill="none" stroke="#505050" stroke-width="1.8"/></svg>
 <svg class="a" style="left:507px;top:414px" width="11" height="11" viewBox="0 0 11 11"><path d="M4 2 L7.5 5.5 L4 9" fill="none" stroke="#505050" stroke-width="1.8"/></svg>
</div>

<!-- RIGHT PANEL -->
<div class="a" style="left:769px;top:219px;width:154px;height:39px;background:#f2f2f6;border-radius:2px 6px 0 0;box-shadow:1px 0 2px rgba(0,0,0,0.05)"></div>
<div class="t" style="left:795px;top:230px;font-size:13px;font-weight:bold;color:#111">Edit Details</div>
<div class="t" style="left:948px;top:234px;font-family:'Liberation Mono',monospace;font-size:12px;font-weight:bold;color:#333">Notes</div>
<div class="a" style="left:769px;top:258px;width:539px;height:447px;background:#f2f2f6;border-radius:0 0 0 9px"></div>
<!-- vertical scrollbar -->
<div class="a" style="left:1291px;top:258px;width:17px;height:447px;background:#f0f0f0"></div>
<div class="a" style="left:1291px;top:275px;width:17px;height:271px;background:#c9c9c9"></div>
<svg class="a" style="left:1294px;top:260px" width="11" height="11" viewBox="0 0 11 11"><path d="M2 7.5 L5.5 4 L9 7.5" fill="none" stroke="#505050" stroke-width="1.8"/></svg>
<svg class="a" style="left:1294px;top:691px" width="11" height="11" viewBox="0 0 11 11"><path d="M2 3.5 L5.5 7 L9 3.5" fill="none" stroke="#505050" stroke-width="1.8"/></svg>

<!-- Basic card -->
<div class="a" style="left:789px;top:279px;width:480px;height:231px;background:#fff;border:1px solid #e6e6ea;border-radius:6px;overflow:hidden">
  <div class="a" style="left:0;top:0;width:478px;height:49px;background:#f8f8f9;border-bottom:1px solid #e2e2e6"></div>
</div>
<div class="t" style="left:805px;top:298px;font-size:13px;font-weight:bold;color:#2a2a2e">Basic</div>
<div class="a" style="left:1247px;top:305.3px;width:6px;height:3px;background:#1a1a1a"></div>

<div class="t" style="left:804px;top:361px;font-size:12px;font-weight:bold;color:#2a2a2e;letter-spacing:-0.1px">Check Number</div>
<div class="a" style="left:804px;top:381px;width:214px;height:39px;border:1px solid #dcdce0;border-radius:5px;background:#fff"></div>
<div class="t" style="left:816px;top:396px;font-size:12.5px;color:#222;letter-spacing:-0.05px">txn-22092517084535</div>

<div class="t" style="left:1040px;top:361px;font-size:12px;font-weight:bold;color:#2a2a2e">Date</div>
<div class="t" style="left:1070px;top:360px;font-size:13px;font-weight:bold;color:#e02020">*</div>
<div class="a" style="left:1040px;top:381px;width:179px;height:41px;border:1px solid #d6d6dc;border-radius:6px;background:#fff"></div>
<div class="t" style="left:1052px;top:397px;font-size:12.5px;color:#1a1a1a;letter-spacing:-0.3px">2023-07-10</div>
<svg class="a" style="left:1196px;top:395px" width="13" height="13" viewBox="0 0 13 13"><path d="M1.5 2.5 H11.5 V11.5 H1.5 Z M1.5 5 H11.5 M4 1 V3.5 M9 1 V3.5" fill="none" stroke="#b0b0b8" stroke-width="1"/></svg>

<div class="t" style="left:804px;top:439px;font-size:12px;font-weight:bold;color:#2a2a2e;letter-spacing:-0.2px">Account Holder Name</div>
<div class="a" style="left:804px;top:459px;width:179px;height:38px;border:1px solid #c9cde0;border-radius:7px;background:#fff"></div>
<div class="t" style="left:812px;top:474px;font-size:12.5px;color:#222;letter-spacing:0px">ABC Inc</div>
<svg class="a" style="left:933px;top:471px" width="14" height="8" viewBox="0 0 14 8"><path d="M2 6 Q7 0 12 5" fill="none" stroke="#333" stroke-width="1.3"/></svg>
<svg class="a" style="left:961px;top:475px" width="10" height="8" viewBox="0 0 10 8"><path d="M1.5 2 L5 5.5 L8.5 2" fill="none" stroke="#333" stroke-width="1.6"/></svg>

<div class="t" style="left:1040px;top:439px;font-size:12px;font-weight:bold;color:#2a2a2e;letter-spacing:-0.2px">Transaction Type</div>
<div class="a" style="left:1040px;top:459px;width:179px;height:38px;border:1px solid #c9cde0;border-radius:7px;background:#fff"></div>
<div class="t" style="left:1048px;top:474px;font-size:12.5px;color:#222;letter-spacing:0.2px">Expense</div>
<svg class="a" style="left:1174px;top:472px" width="13" height="13" viewBox="0 0 13 13"><circle cx="6.5" cy="6.5" r="5.6" fill="#6b6f7a"/><path d="M4.4 4.4 L8.6 8.6 M8.6 4.4 L4.4 8.6" stroke="#fff" stroke-width="1.5"/></svg>
<svg class="a" style="left:1197px;top:475px" width="10" height="8" viewBox="0 0 10 8"><path d="M1.5 2 L5 5.5 L8.5 2" fill="none" stroke="#333" stroke-width="1.6"/></svg>

<!-- Others card -->
<div class="a" style="left:789px;top:560px;width:480px;height:152px;background:#fff;border:1px solid #e6e6ea;border-radius:6px;overflow:hidden">
  <div class="a" style="left:0;top:0;width:478px;height:49px;background:#f8f8f9;border-bottom:1px solid #e2e2e6"></div>
</div>
<div class="t" style="left:805px;top:579px;font-size:13px;font-weight:bold;color:#2a2a2e">Others</div>
<div class="a" style="left:1247px;top:586.3px;width:6px;height:3px;background:#1a1a1a"></div>
<div class="t" style="left:804px;top:642px;font-size:12px;font-weight:bold;color:#2a2a2e;letter-spacing:-0.1px">Description</div>
<div class="a" style="left:804px;top:662px;width:214px;height:40px;border:1px solid #dcdce0;border-radius:5px;background:#fff"></div>
<div class="t" style="left:816px;top:677px;font-size:12.5px;color:#222;letter-spacing:0.2px">Maly Thi Nu</div>
<div class="t" style="left:1040px;top:642px;font-size:12px;font-weight:bold;color:#2a2a2e">Amount</div>
<div class="a" style="left:1040px;top:662px;width:214px;height:40px;border:1px solid #dcdce0;border-radius:5px;background:#fff"></div>
<div class="t" style="left:1052px;top:677px;font-size:12.5px;color:#222;letter-spacing:0.3px">-1000.0</div>
<!-- mask below panel -->
<div class="a" style="left:769px;top:705px;width:540px;height:10px;background:#fff"></div>
<div class="a" style="left:769px;top:712px;width:540px;height:1px;background:#e3e3e6"></div>

<!-- Apply changes -->
<div class="a" style="left:1143px;top:721px;width:147px;height:45px;border:2px solid #f06a6a;background:#d6d6d6;box-shadow:3px 3px 4px rgba(0,0,0,0.25)"></div>
<div class="a" style="left:1148px;top:728px;width:138px;height:34px;border-radius:6px;background:#0000c0"></div>
<div class="t" style="left:1169.5px;top:739px;font-size:14px;color:#fff;letter-spacing:0.05px;-webkit-text-stroke:0.2px #fff">Apply Changes</div>

<!-- footer -->
<div class="t" style="left:456px;top:811.8px;font-size:12px;color:#3a3a3a;letter-spacing:-0.42px">© 2025 SaasAnt™</div>
<div class="t" style="left:554px;top:811.8px;font-size:12px;color:#3a3a3a;letter-spacing:0px">|</div>
<div class="t" style="left:559.5px;top:811.8px;font-size:12px;color:#3a3a3a;letter-spacing:-0.35px">Chat</div>
<div class="t" style="left:589.5px;top:811.8px;font-size:12px;color:#3a3a3a;letter-spacing:0px">|</div>
<div class="t" style="left:609px;top:811.8px;font-size:12px;color:#3a3a3a;letter-spacing:-0.45px">+1(619) 377-0977 (9 A.M to 5 P.M EST)</div>
<div class="t" style="left:810px;top:811.8px;font-size:12px;color:#3a3a3a;letter-spacing:0px">|</div>
<div class="t" style="left:831.5px;top:811.8px;font-size:12px;color:#3a3a3a;letter-spacing:-0.28px">support@saasant.com</div>
<div class="t" style="left:953.5px;top:811.8px;font-size:12px;color:#3a3a3a;letter-spacing:0px">|</div>
<div class="t" style="left:959.5px;top:811.8px;font-size:12px;color:#3a3a3a;letter-spacing:-0.33px">Privacy</div>
<div class="t" style="left:1003px;top:811.8px;font-size:12px;color:#3a3a3a;letter-spacing:0px">|</div>
<div class="t" style="left:1008.5px;top:811.8px;font-size:12px;color:#3a3a3a;letter-spacing:-0.18px">Security</div>
<div class="t" style="left:1057px;top:811.8px;font-size:12px;color:#3a3a3a;letter-spacing:0px">|</div>
<div class="t" style="left:1063px;top:811.8px;font-size:12px;color:#3a3a3a;letter-spacing:-0.33px">Terms</div>
<div class="t" style="left:1100px;top:811.8px;font-size:12px;color:#3a3a3a;letter-spacing:0px">|</div>
<div class="t" style="left:1106px;top:811.8px;font-size:12px;color:#3a3a3a;letter-spacing:-0.17px">Report feature</div>
<svg class="a" style="left:597px;top:812px" width="12" height="12" viewBox="0 0 12 12"><path d="M3 1.5 L5 4 L4 5.5 C4.5 7 5.5 8 7 8.5 L8.5 7.5 L11 9.5 L9.5 11 C5 11 1.5 7 1.5 3 Z" fill="none" stroke="#555" stroke-width="0.9"/></svg>
<svg class="a" style="left:817px;top:812px" width="13" height="10" viewBox="0 0 13 10"><path d="M1 1 H12 V9 H1 Z M1 1 L6.5 5.5 L12 1" fill="none" stroke="#555" stroke-width="1"/></svg>

</div>
</body></html>
